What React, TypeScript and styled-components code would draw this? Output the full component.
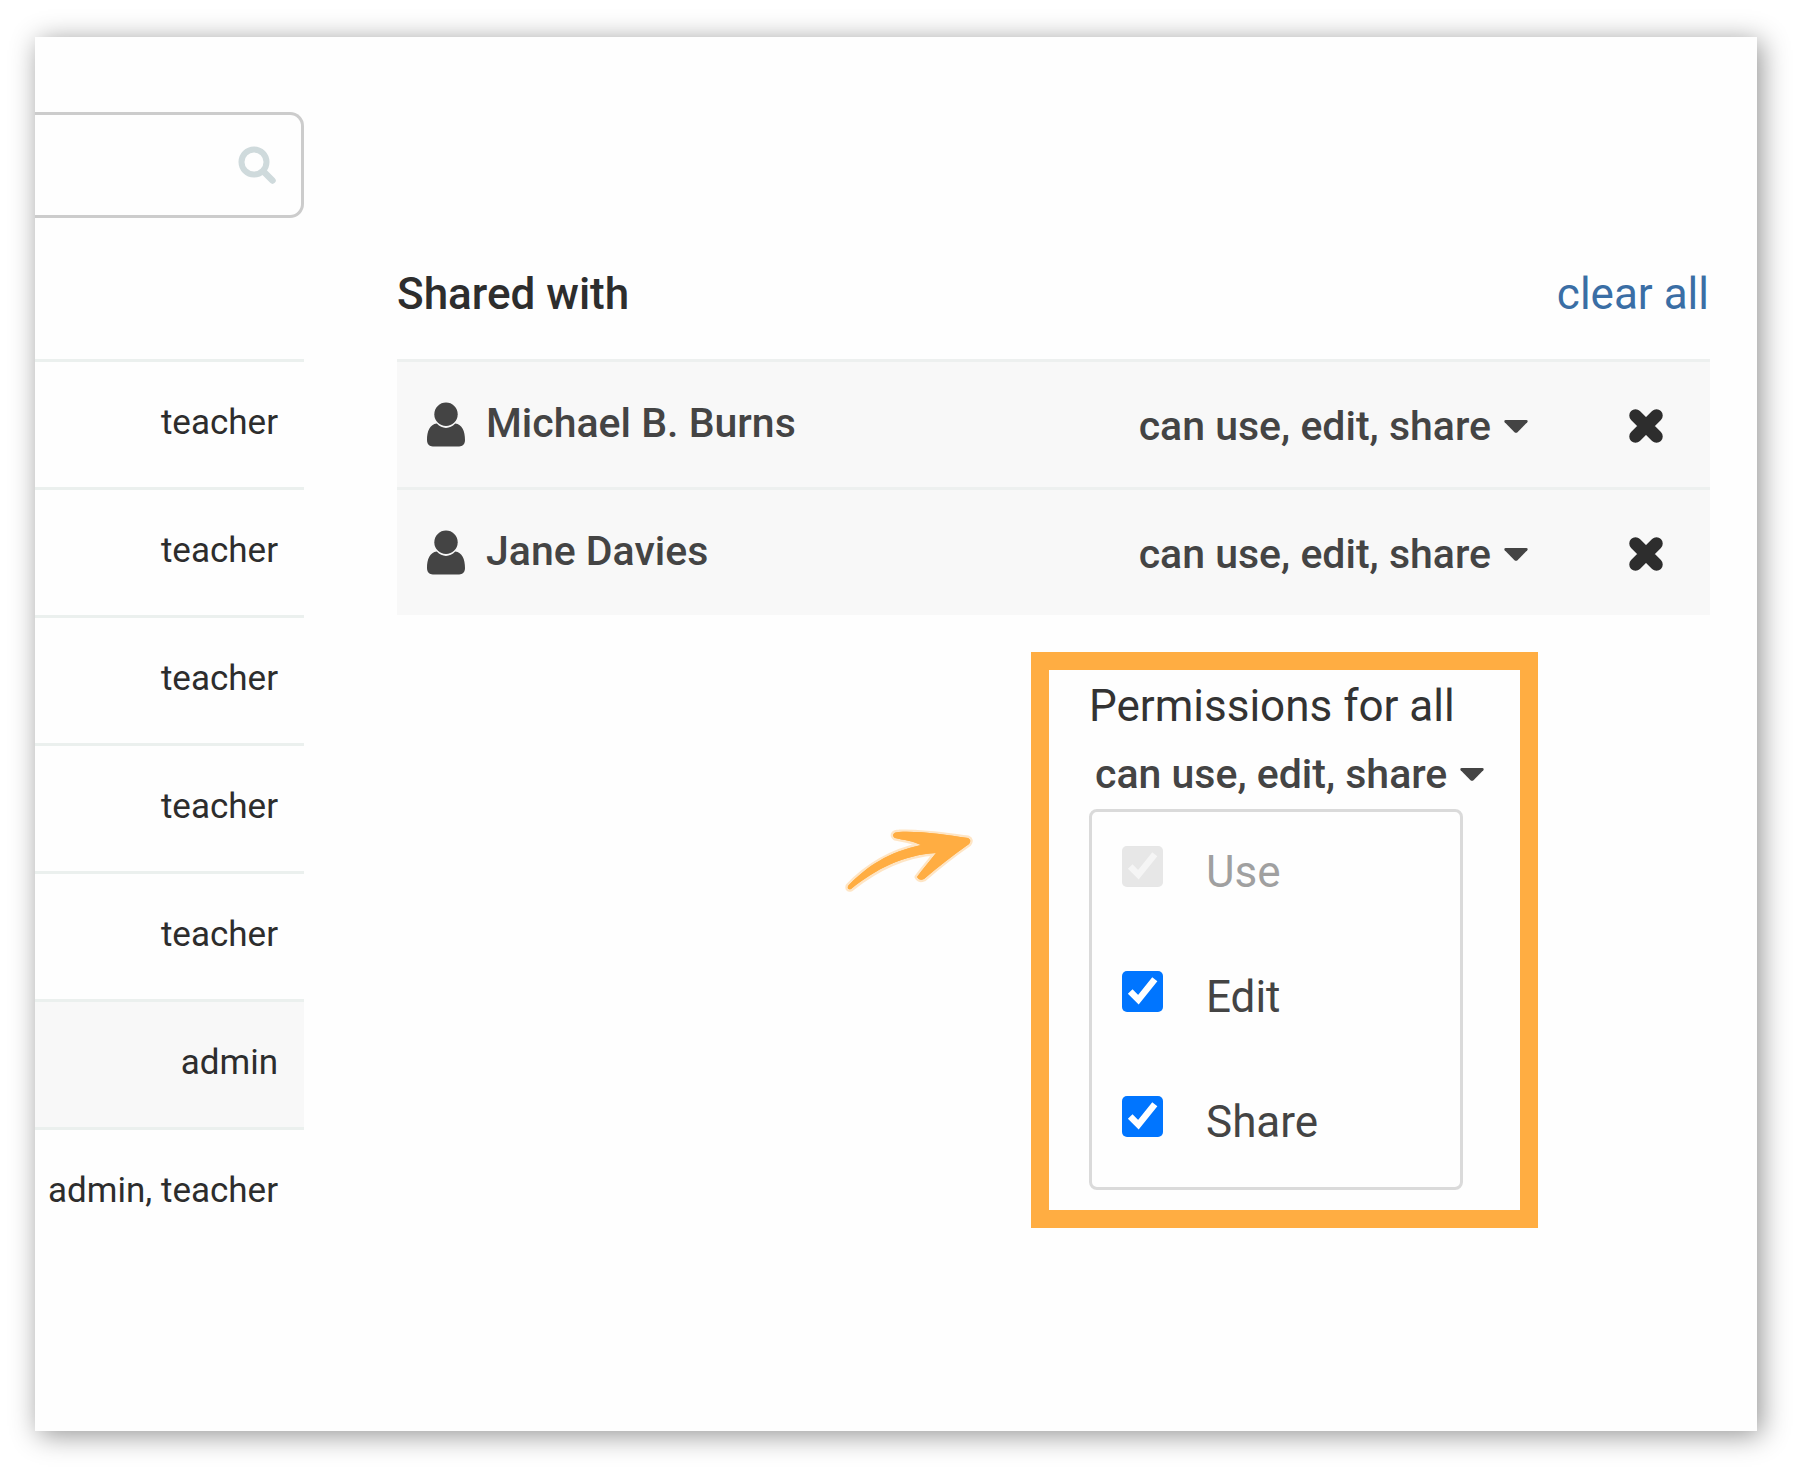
import React, { useState } from "react";
import styled, { createGlobalStyle } from "styled-components";

const GlobalStyle = createGlobalStyle`
  *, *::before, *::after { box-sizing: border-box; }
  body {
    margin: 0;
    background: #fff;
    color: #2d2d2d;
    font-family: Roboto, "Liberation Sans", sans-serif;
  }
  button, input { font: inherit; color: inherit; }
`;

const Page = styled.div`
  display: flex;
  min-height: 100vh;
  padding: 37px 43px 44px 35px;
`;

const Card = styled.main`
  flex: 1;
  display: grid;
  grid-template-columns: 269fr 1313fr;
  column-gap: 93px;
  align-items: start;
  padding-right: 47px;
  background: #fefefe;
  box-shadow: 4px 4px 26px rgba(0, 0, 0, 0.43);
`;

const People = styled.section`
  min-width: 0;
  padding-top: 75px;
`;

const SearchForm = styled.form`
  display: flex;
  align-items: center;
  height: 106px;
  margin-bottom: 141px;
  padding-right: 25px;
  border: 3px solid #ccc;
  border-left: 0;
  border-radius: 0 14px 14px 0;
`;

const SearchInput = styled.input`
  flex: 1;
  min-width: 0;
  height: 100%;
  padding: 0 16px;
  border: 0;
  outline: 0;
  background: transparent;
  font-size: 35px;
`;

const IconButton = styled.button`
  display: flex;
  padding: 0;
  border: 0;
  background: none;
  color: #2d2d2d;
  cursor: pointer;
`;

const SearchButton = styled(IconButton)`
  color: #cfdadc;
`;

const List = styled.ul`
  margin: 0;
  padding: 0;
  list-style: none;
`;

const RoleRow = styled.li<{ $selected?: boolean }>`
  display: flex;
  align-items: center;
  justify-content: flex-end;
  height: 128px;
  padding: 0 26px 4px 0;
  border-top: 3px solid #ebf0ee;
  background: ${(p) => (p.$selected ? "#f8f8f8" : "transparent")};
  font-size: 35px;
  white-space: nowrap;
`;

const Sharing = styled.section`
  display: flex;
  flex-direction: column;
  padding-top: 231px;
`;

const SharingHeader = styled.header`
  display: flex;
  align-items: baseline;
  justify-content: space-between;
  margin-bottom: 39px;
  padding-right: 1px;
  line-height: 52px;
`;

const Title = styled.h2`
  margin: 0;
  font-size: 44px;
  font-weight: 500;
`;

const ClearLink = styled.a`
  color: #3a6ea5;
  font-size: 44px;
  text-decoration: none;
`;

const UserRow = styled.li`
  display: flex;
  align-items: center;
  height: 128px;
  padding: 0 46px 0 30px;
  border-top: 3px solid #edf0ef;
  background: #f8f8f8;
`;

const UserName = styled.span`
  flex: 1;
  margin-left: 21px;
  padding-bottom: 3px;
  color: #444;
  font-size: 41px;
  font-weight: 500;
`;

const Actions = styled.div`
  display: flex;
  align-items: center;
  gap: 100px;
  padding-top: 3px;
`;

const Toggle = styled.button`
  display: flex;
  align-items: center;
  gap: 13px;
  padding: 0;
  border: 0;
  background: none;
  color: #444;
  font-size: 41px;
  font-weight: 500;
  line-height: 52px;
  white-space: nowrap;
  cursor: pointer;
`;

const Bulk = styled.div`
  display: flex;
  align-items: flex-start;
  justify-content: flex-end;
  gap: 58px;
  margin: 37px 172px 0 0;
`;

const ArrowSlot = styled.div`
  padding-top: 177px;
`;

const Highlight = styled.div`
  display: flex;
  flex-direction: column;
  align-items: flex-start;
  width: 507px;
  padding: 10px 0 20px 40px;
  border: 18px solid #ffad42;
`;

const BulkTitle = styled.h3`
  margin: 0 0 16px;
  color: #333;
  font-size: 44px;
  font-weight: 400;
  line-height: 52px;
`;

const BulkToggle = styled(Toggle)`
  margin: 0 0 9px 6px;
`;

const Menu = styled.div`
  display: flex;
  flex-direction: column;
  gap: 73px;
  width: 374px;
  padding: 34px 30px 39px;
  border: 3px solid #dadada;
  border-radius: 8px;
`;

const Option = styled.label<{ $disabled?: boolean }>`
  display: flex;
  align-items: baseline;
  gap: 43px;
  color: #444;
  font-size: 44px;
  line-height: 52px;
  opacity: ${(p) => (p.$disabled ? 0.5 : 1)};
`;

const Checkbox = styled.input`
  width: 41px;
  height: 41px;
  margin: 0;
  accent-color: #0075ff;
  clip-path: inset(0 round 5px);
`;

const SearchIcon = () => (
  <svg width="38" height="38" viewBox="0 0 38 38" fill="none" stroke="currentColor" aria-hidden="true">
    <circle cx="16" cy="16" r="12.5" strokeWidth="6" />
    <path d="M25.5 25.5 34.5 34.5" strokeWidth="6.5" strokeLinecap="round" />
  </svg>
);

const UserIcon = () => (
  <svg width="38" height="46" viewBox="0 0 39 46" fill="#444" aria-hidden="true">
    <circle cx="19.5" cy="12" r="12" />
    <path d="M10 21.5C13 24.5 16 26 19.5 26S26 24.5 29 21.5C36 22.5 39 29 39 38.5C39 43 36.5 45 33 45H6C2.5 45 0 43 0 38.5C0 29 3 22.5 10 21.5Z" />
  </svg>
);

const Caret = () => (
  <svg width="24" height="13" viewBox="0 0 24 13" fill="currentColor" aria-hidden="true">
    <path d="M1.5 0h21q2 0.5 0.8 2.2L13.5 12.2q-1.5 1.3-3 0L0.7 2.2Q-0.5 0.5 1.5 0Z" />
  </svg>
);

const CrossIcon = () => (
  <svg width="36" height="36" viewBox="0 0 36 36" stroke="currentColor" aria-hidden="true">
    <path d="M7.5 7.5 28.5 28.5M28.5 7.5 7.5 28.5" strokeWidth="12.5" strokeLinecap="round" fill="none" />
  </svg>
);

const arrowShape =
  "M3 57C22 37 44 23 76 16C68 12 59 11 50 9C46 6 49 3 54 3C77 2 100 6 123 9Q127 11 124 15C108 26 93 38 79 50Q74 52 72 48C77 41 84 33 91 24C58 26 31 40 6 60Q2 61 3 57Z";

const Arrow = () => (
  <svg width="128" height="64" viewBox="0 0 128 64" fill="#ffad42" aria-hidden="true">
    <path d={arrowShape} stroke="#ffad42" strokeOpacity="0.3" strokeWidth="5" strokeLinejoin="round" />
    <path d={arrowShape} />
  </svg>
);

const roles = ["teacher", "teacher", "teacher", "teacher", "teacher", "admin", "admin, teacher"];
const users = ["Michael B. Burns", "Jane Davies"];

export default function App() {
  const [edit, setEdit] = useState(true);
  const [share, setShare] = useState(true);
  const summary = `can ${["use", edit && "edit", share && "share"].filter(Boolean).join(", ")}`;

  return (
    <>
      <GlobalStyle />
      <Page>
        <Card>
          <People>
            <SearchForm onSubmit={(e) => e.preventDefault()}>
              <SearchInput type="text" aria-label="Search people" />
              <SearchButton type="submit" aria-label="Search">
                <SearchIcon />
              </SearchButton>
            </SearchForm>
            <List>
              {roles.map((role, i) => (
                <RoleRow key={i} $selected={role === "admin"}>
                  {role}
                </RoleRow>
              ))}
            </List>
          </People>

          <Sharing>
            <SharingHeader>
              <Title>Shared with</Title>
              <ClearLink href="#clear">clear all</ClearLink>
            </SharingHeader>
            <List>
              {users.map((name) => (
                <UserRow key={name}>
                  <UserIcon />
                  <UserName>{name}</UserName>
                  <Actions>
                    <Toggle type="button" aria-haspopup="true">
                      {summary}
                      <Caret />
                    </Toggle>
                    <IconButton type="button" aria-label={`Remove ${name}`}>
                      <CrossIcon />
                    </IconButton>
                  </Actions>
                </UserRow>
              ))}
            </List>
            <Bulk>
              <ArrowSlot>
                <Arrow />
              </ArrowSlot>
              <Highlight>
                <BulkTitle>Permissions for all</BulkTitle>
                <BulkToggle type="button" aria-haspopup="true" aria-expanded="true">
                  {summary}
                  <Caret />
                </BulkToggle>
                <Menu>
                  <Option $disabled>
                    <Checkbox type="checkbox" checked disabled readOnly />
                    Use
                  </Option>
                  <Option>
                    <Checkbox type="checkbox" checked={edit} onChange={() => setEdit(!edit)} />
                    Edit
                  </Option>
                  <Option>
                    <Checkbox type="checkbox" checked={share} onChange={() => setShare(!share)} />
                    Share
                  </Option>
                </Menu>
              </Highlight>
            </Bulk>
          </Sharing>
        </Card>
      </Page>
    </>
  );
}
